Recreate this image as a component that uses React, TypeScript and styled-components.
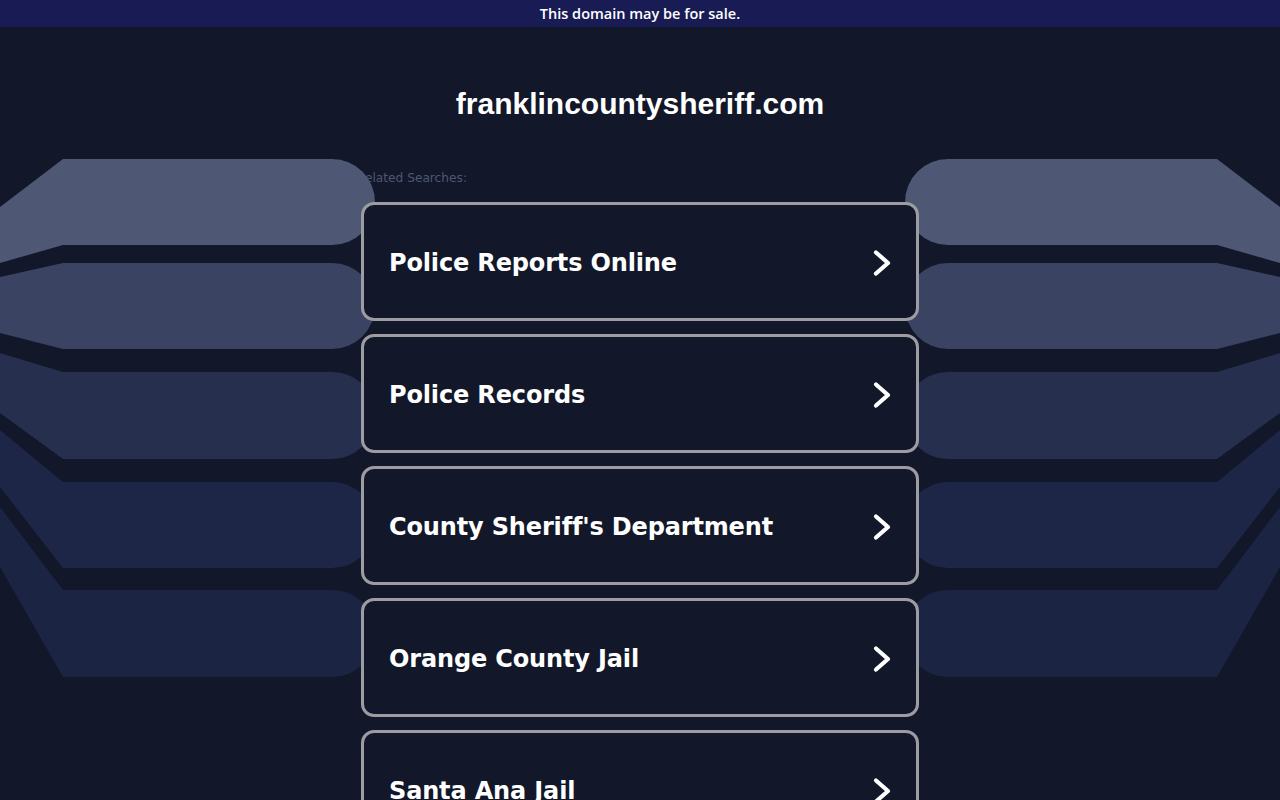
import styled, { createGlobalStyle } from "styled-components";

const GlobalStyle = createGlobalStyle`
  html, body {
    margin: 0;
    padding: 0;
    background: #121729;
  }
`;

const Page = styled.div`
  position: relative;
  min-height: 800px;
  background: #121729;
  overflow: hidden;
  font-family: "DejaVu Sans", Verdana, sans-serif;
`;

const SaleBar = styled.div`
  height: 27px;
  display: flex;
  align-items: center;
  justify-content: center;
  background: #191b54;
  color: #ffffff;
  font-family: "Open Sans", "Liberation Sans", sans-serif;
  font-weight: 600;
  font-size: 14.5px;
  padding-bottom: 1px;
  box-sizing: border-box;
`;

const Main = styled.main`
  width: 558px;
  margin: 0 auto;
  padding-top: 59px;
  padding-bottom: 40px;
`;

const DomainTitle = styled.h1`
  margin: 0;
  height: 36px;
  line-height: 36px;
  text-align: center;
  color: #ffffff;
  font-family: "Liberation Sans", Arial, sans-serif;
  font-weight: 700;
  font-size: 30px;
`;

const RelatedLabel = styled.div`
  margin-top: 49px;
  margin-left: -4px;
  height: 14px;
  line-height: 14px;
  color: #4e5676;
  font-family: "DejaVu Sans", Verdana, sans-serif;
  font-size: 12.2px;
`;

const List = styled.div`
  position: relative;
  z-index: 2;
  margin-top: 17px;
  display: flex;
  flex-direction: column;
  gap: 13px;
`;

const Card = styled.a`
  box-sizing: border-box;
  height: 119px;
  display: flex;
  align-items: center;
  justify-content: space-between;
  padding: 3px 24px 0 25px;
  border: 3px solid #9c9ca2;
  border-radius: 13px;
  background: #121729;
  color: #ffffff;
  text-decoration: none;
  cursor: pointer;
`;

const CardText = styled.span`
  font-family: "DejaVu Sans", Verdana, sans-serif;
  font-weight: 700;
  font-size: 24px;
  letter-spacing: -0.15px;
`;

const Backdrop = styled.svg`
  position: absolute;
  top: 0;
  left: 0;
  z-index: 1;
  pointer-events: none;
`;

const searches = [
  "Police Reports Online",
  "Police Records",
  "County Sheriff's Department",
  "Orange County Jail",
  "Santa Ana Jail",
];

const wing = [
  { d: "M0,207 L63,159 L332,159 A43,43 0 0 1 332,245 L63,245 L0,263 Z", fill: "#4e5773" },
  { d: "M0,277 L63,263 L332,263 A43,43 0 0 1 332,349 L63,349 L0,333 Z", fill: "#3b4362" },
  { d: "M0,353 L63,372 L332,372 A43,43 0 0 1 332,459 L63,459 L0,413 Z", fill: "#272f4f" },
  { d: "M0,430 L63,482 L332,482 A43,43 0 0 1 332,568 L63,568 L0,487 Z", fill: "#1e2647" },
  { d: "M0,507 L63,590 L332,590 A43,43 0 0 1 332,677 L63,677 L0,567 Z", fill: "#1c2444" },
];

function Wings() {
  return (
    <Backdrop width="1280" height="800" viewBox="0 0 1280 800">
      <g>
        {wing.map((w) => (
          <path key={w.d} d={w.d} fill={w.fill} />
        ))}
      </g>
      <g transform="translate(1280,0) scale(-1,1)">
        {wing.map((w) => (
          <path key={w.d} d={w.d} fill={w.fill} />
        ))}
      </g>
    </Backdrop>
  );
}

function Chevron() {
  return (
    <svg width="20" height="28" viewBox="0 0 20 28">
      <polyline
        points="4,3.5 16,14 4,24.5"
        fill="none"
        stroke="#ffffff"
        strokeWidth="4.2"
        strokeLinecap="round"
        strokeLinejoin="round"
      />
    </svg>
  );
}

export default function App() {
  return (
    <Page>
      <GlobalStyle />
      <SaleBar>This domain may be for sale.</SaleBar>
      <Wings />
      <Main>
        <DomainTitle>franklincountysheriff.com</DomainTitle>
        <RelatedLabel>Related Searches:</RelatedLabel>
        <List>
          {searches.map((s) => (
            <Card key={s}>
              <CardText>{s}</CardText>
              <Chevron />
            </Card>
          ))}
        </List>
      </Main>
    </Page>
  );
}
